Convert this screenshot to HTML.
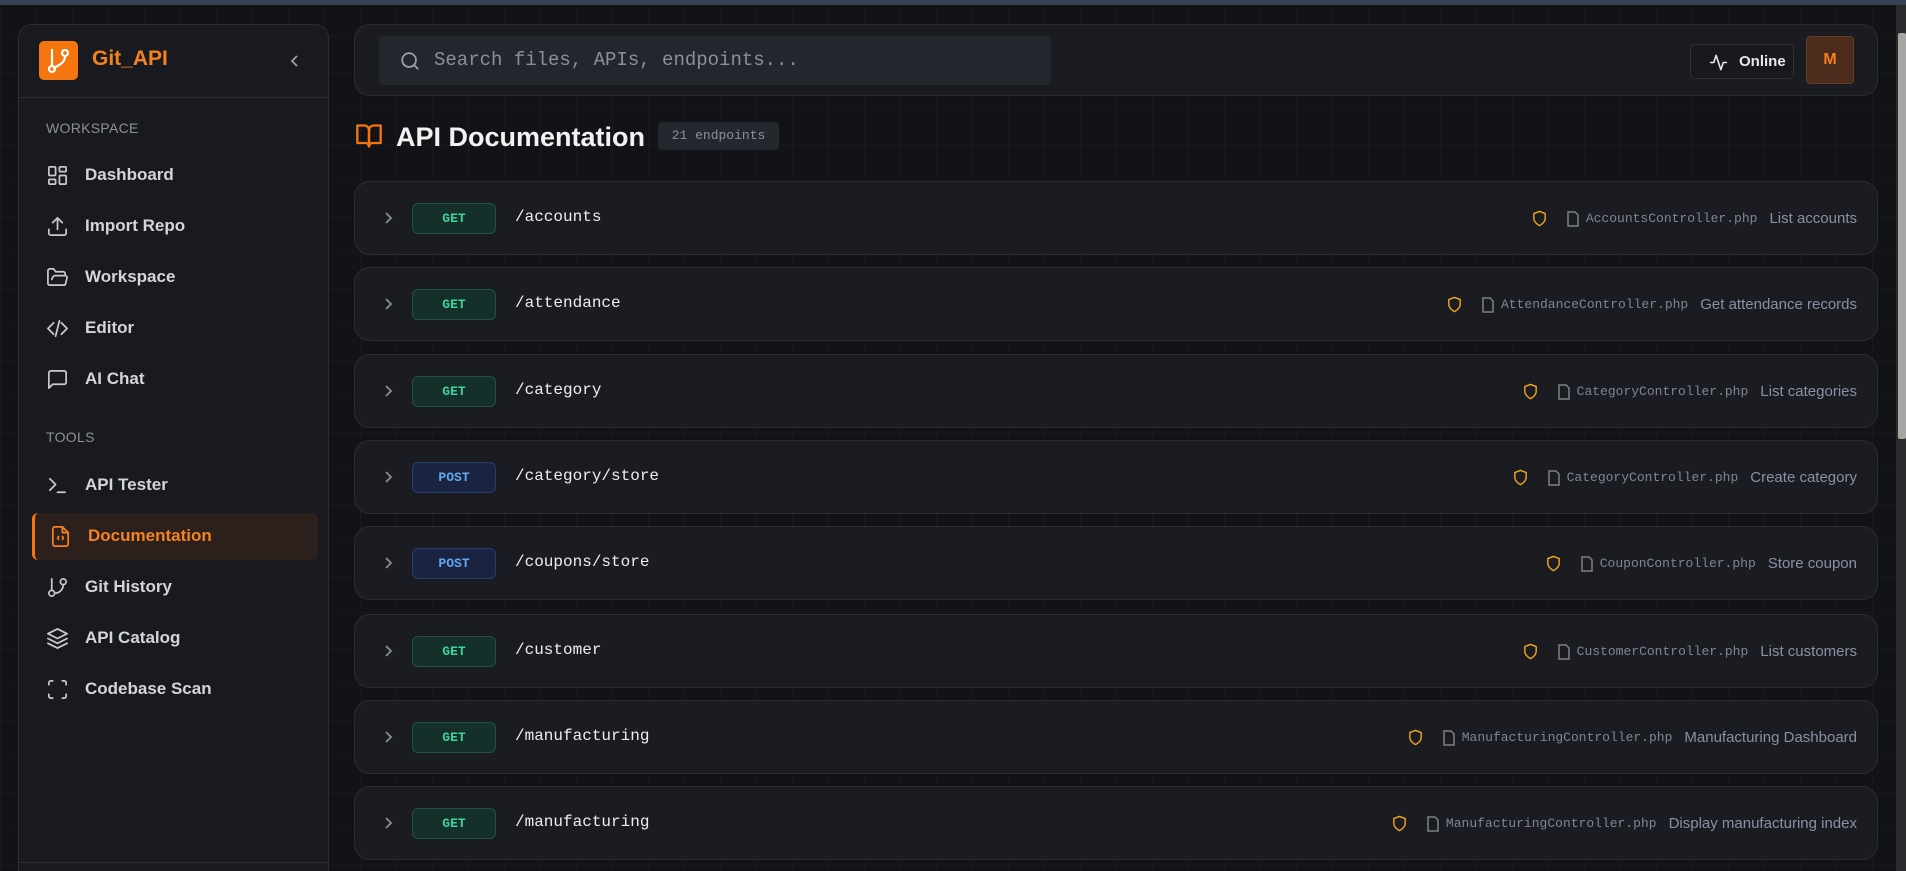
<!DOCTYPE html>
<html><head><meta charset="utf-8"><style>
*{box-sizing:border-box;margin:0;padding:0}
html,body{width:1906px;height:871px;overflow:hidden}
body{background:#111317;font-family:"Liberation Sans",sans-serif;position:relative;
background-image:linear-gradient(#17191d 1px,transparent 1px),linear-gradient(90deg,#17191d 1px,transparent 1px);background-size:36px 36px;}
#wrap{position:absolute;left:0;top:0;width:1906px;height:871px;overflow:hidden}
.topstrip{position:absolute;left:0;top:0;width:1906px;height:5px;background:#374256}
.sb{position:absolute;left:18px;top:24px;width:311px;height:880px;background:#181a1f;border:1px solid #2a2d33;border-radius:14px}
.logo{position:absolute;left:20px;top:16px;width:39px;height:39px;background:#f5760f;border-radius:5px}
.brand{position:absolute;left:73px;top:22px;color:#f5811f;font-size:21px;font-weight:bold}
.hdiv{position:absolute;left:0;right:0;top:72px;border-top:1px solid #2a2d33}
.lbl{position:absolute;left:27px;color:#8d9098;font-size:14px;letter-spacing:.3px}
.nav{position:absolute;left:27px;height:22px;display:flex;align-items:center;color:#d4d5d8;font-size:17px;font-weight:bold}
.nav svg{width:23px;height:23px;margin-right:16px;fill:none;stroke:#c8c9cc;stroke-width:1.8;stroke-linecap:round;stroke-linejoin:round}
.act{position:absolute;left:13px;top:488px;width:286px;height:47px;background:#2c201d;border-left:3px solid #f5760f;border-radius:6px}
.card{position:absolute;left:354px;width:1524px;background:#1a1c21;border:1px solid #2a2d33;border-radius:16px}
.search{position:absolute;left:24px;top:11px;width:672px;height:49px;background:#23262d;border-radius:4px;color:#8c8f96;font-family:"Liberation Mono",monospace;font-size:19px;line-height:49px;padding-left:55px}
.online{position:absolute;left:1335px;top:19px;width:104px;height:35px;border:1px solid #2e3137;border-radius:5px;background:#17191d;color:#e8e8ea;font-weight:bold;font-size:15px;line-height:33px;padding-left:48px}
.av{position:absolute;left:1451px;top:11px;width:48px;height:48px;background:#4a2b1c;border:1px solid #6b3a1e;border-radius:4px;color:#f5811f;font-weight:bold;font-size:16px;text-align:center;line-height:46px}
.title{position:absolute;left:396px;top:122px;color:#f2f2f3;font-size:27px;font-weight:bold}
.badge{position:absolute;left:658px;top:122px;width:121px;height:28px;background:#24272d;border-radius:4px;color:#8d9098;font-family:"Liberation Mono",monospace;font-size:13px;text-align:center;line-height:28px}
.row{height:74px}
.chev{position:absolute;left:26px;top:29px;width:14px;height:14px;fill:none;stroke:#8a8d94;stroke-width:1.8}
.m{position:absolute;left:57px;top:21px;width:84px;height:31px;border-radius:6px;font-family:"Liberation Mono",monospace;font-weight:bold;font-size:13px;text-align:center;line-height:29px}
.get{background:#15302a;border:1px solid #1f5443;color:#3fd39a}
.post{background:#1a2440;border:1px solid #223c74;color:#62a7ef}
.path{position:absolute;left:160px;top:26px;color:#eeeef0;font-family:"Liberation Mono",monospace;font-size:16px}
.rt{position:absolute;right:20px;top:27px;display:flex;align-items:center;white-space:nowrap}
.rt .sh{width:17px;height:19px;fill:none;stroke:#f0a61c;stroke-width:2;margin-right:18px}
.rt .fi{width:14px;height:16px;fill:none;stroke:#7d8087;stroke-width:1.5;margin-right:6px}
.fn{font-family:"Liberation Mono",monospace;font-size:13px;color:#7e8595;margin-right:12px}
.ds{font-size:15px;color:#8891a3}
.scroll{position:absolute;left:1896px;top:5px;width:10px;height:866px;background:#2b2b2d}
.thumb{position:absolute;left:1898px;top:33px;width:8px;height:406px;background:#a8a6a4;border-radius:2px}
</style></head><body><div id="wrap">
<div class="topstrip"></div>
<div class="sb">
 <div class="logo"><svg width="39" height="39" viewBox="0 0 39 39" fill="none" stroke="#fff" stroke-width="2.2" stroke-linecap="round"><line x1="13" y1="9" x2="13" y2="25"/><circle cx="13" cy="28" r="3"/><circle cx="26" cy="12" r="3"/><path d="M26 15c0 7-6 9-11 12"/></svg></div>
 <div class="brand">Git_API</div>
 <svg style="position:absolute;left:270px;top:29px" width="12" height="14" viewBox="0 0 12 14" fill="none" stroke="#9a9da3" stroke-width="1.8"><path d="M8 2L3 7l5 5"/></svg>
 <div class="hdiv"></div>
 <div class="lbl" style="top:95px">WORKSPACE</div>
 <div class="nav" style="top:139px"><svg viewBox="0 0 24 24"><rect x="3" y="3" width="7" height="9" rx="1"/><rect x="14" y="3" width="7" height="5" rx="1"/><rect x="14" y="12" width="7" height="9" rx="1"/><rect x="3" y="16" width="7" height="5" rx="1"/></svg>Dashboard</div>
 <div class="nav" style="top:190px"><svg viewBox="0 0 24 24"><path d="M21 15v4a2 2 0 0 1-2 2H5a2 2 0 0 1-2-2v-4"/><path d="M17 8l-5-5-5 5"/><path d="M12 3v12"/></svg>Import Repo</div>
 <div class="nav" style="top:241px"><svg viewBox="0 0 24 24"><path d="M6 14l1.5-3A2 2 0 0 1 9.2 10H20a2 2 0 0 1 1.9 2.5l-1.5 6A2 2 0 0 1 18.4 20H4a2 2 0 0 1-2-2V5a2 2 0 0 1 2-2h4l2 3h8a2 2 0 0 1 2 2v2"/></svg>Workspace</div>
 <div class="nav" style="top:292px"><svg viewBox="0 0 24 24"><path d="M16 18l6-6-6-6"/><path d="M8 6l-6 6 6 6"/><path d="M14 4l-4 16"/></svg>Editor</div>
 <div class="nav" style="top:343px"><svg viewBox="0 0 24 24"><path d="M21 15a2 2 0 0 1-2 2H7l-4 4V5a2 2 0 0 1 2-2h14a2 2 0 0 1 2 2z"/></svg>AI Chat</div>
 <div class="lbl" style="top:404px">TOOLS</div>
 <div class="nav" style="top:449px"><svg viewBox="0 0 24 24"><path d="M4 17l6-6-6-6"/><path d="M12 19h8"/></svg>API Tester</div>
 <div class="act"></div>
 <div class="nav" style="top:500px;left:30px;color:#f5811f"><svg viewBox="0 0 24 24" style="stroke:#f5811f"><path d="M14 2H6a2 2 0 0 0-2 2v16a2 2 0 0 0 2 2h12a2 2 0 0 0 2-2V8z"/><path d="M14 2v6h6"/><path d="M10 12l-1 1.5 1 1.5M14 12l1 1.5-1 1.5"/></svg>Documentation</div>
 <div class="nav" style="top:551px"><svg viewBox="0 0 24 24"><line x1="6" y1="3" x2="6" y2="15"/><circle cx="18" cy="6" r="3"/><circle cx="6" cy="18" r="3"/><path d="M18 9a9 9 0 0 1-9 9"/></svg>Git History</div>
 <div class="nav" style="top:602px"><svg viewBox="0 0 24 24"><path d="M12 2L2 7l10 5 10-5z"/><path d="M2 12l10 5 10-5"/><path d="M2 17l10 5 10-5"/></svg>API Catalog</div>
 <div class="nav" style="top:653px"><svg viewBox="0 0 24 24"><path d="M3 7V5a2 2 0 0 1 2-2h2M17 3h2a2 2 0 0 1 2 2v2M21 17v2a2 2 0 0 1-2 2h-2M7 21H5a2 2 0 0 1-2-2v-2"/></svg>Codebase Scan</div>
 <div class="hdiv" style="top:837px"></div>
</div>

<div class="card" style="top:24px;height:72px">
 <div class="search">Search files, APIs, endpoints...</div>
 <svg style="position:absolute;left:44px;top:25px" width="22" height="22" viewBox="0 0 24 24" fill="none" stroke="#9a9da3" stroke-width="2"><circle cx="11" cy="11" r="7.5"/><path d="M21 21l-4.5-4.5"/></svg>
 <div class="online">Online</div>
 <svg style="position:absolute;left:1354px;top:28px" width="19" height="19" viewBox="0 0 24 24" fill="none" stroke="#e8e8ea" stroke-width="2" stroke-linecap="round" stroke-linejoin="round"><path d="M22 12h-4l-3 9L9 3l-3 9H2"/></svg>
 <div class="av">M</div>
</div>

<svg style="position:absolute;left:354px;top:122px" width="30" height="28" viewBox="0 0 24 24" fill="none" stroke="#f5760f" stroke-width="2" stroke-linejoin="round"><path d="M2 3h6a4 4 0 0 1 4 4v14a3 3 0 0 0-3-3H2z"/><path d="M22 3h-6a4 4 0 0 0-4 4v14a3 3 0 0 1 3-3h7z"/></svg>
<div class="title">API Documentation</div>
<div class="badge">21 endpoints</div>

<div class="card row" style="top:181px"><svg class="chev" viewBox="0 0 14 14"><path d="M5 2l5 5-5 5"/></svg><div class="m get">GET</div><div class="path">/accounts</div><div class="rt"><svg class="sh" viewBox="0 0 24 24"><path d="M12 22s8-4 8-10V5l-8-3-8 3v7c0 6 8 10 8 10z"/></svg><svg class="fi" viewBox="0 0 14 16"><path d="M9 1H2v14h10V4z"/></svg><span class="fn">AccountsController.php</span><span class="ds">List accounts</span></div></div>
<div class="card row" style="top:267px"><svg class="chev" viewBox="0 0 14 14"><path d="M5 2l5 5-5 5"/></svg><div class="m get">GET</div><div class="path">/attendance</div><div class="rt"><svg class="sh" viewBox="0 0 24 24"><path d="M12 22s8-4 8-10V5l-8-3-8 3v7c0 6 8 10 8 10z"/></svg><svg class="fi" viewBox="0 0 14 16"><path d="M9 1H2v14h10V4z"/></svg><span class="fn">AttendanceController.php</span><span class="ds">Get attendance records</span></div></div>
<div class="card row" style="top:354px"><svg class="chev" viewBox="0 0 14 14"><path d="M5 2l5 5-5 5"/></svg><div class="m get">GET</div><div class="path">/category</div><div class="rt"><svg class="sh" viewBox="0 0 24 24"><path d="M12 22s8-4 8-10V5l-8-3-8 3v7c0 6 8 10 8 10z"/></svg><svg class="fi" viewBox="0 0 14 16"><path d="M9 1H2v14h10V4z"/></svg><span class="fn">CategoryController.php</span><span class="ds">List categories</span></div></div>
<div class="card row" style="top:440px"><svg class="chev" viewBox="0 0 14 14"><path d="M5 2l5 5-5 5"/></svg><div class="m post">POST</div><div class="path">/category/store</div><div class="rt"><svg class="sh" viewBox="0 0 24 24"><path d="M12 22s8-4 8-10V5l-8-3-8 3v7c0 6 8 10 8 10z"/></svg><svg class="fi" viewBox="0 0 14 16"><path d="M9 1H2v14h10V4z"/></svg><span class="fn">CategoryController.php</span><span class="ds">Create category</span></div></div>
<div class="card row" style="top:526px"><svg class="chev" viewBox="0 0 14 14"><path d="M5 2l5 5-5 5"/></svg><div class="m post">POST</div><div class="path">/coupons/store</div><div class="rt"><svg class="sh" viewBox="0 0 24 24"><path d="M12 22s8-4 8-10V5l-8-3-8 3v7c0 6 8 10 8 10z"/></svg><svg class="fi" viewBox="0 0 14 16"><path d="M9 1H2v14h10V4z"/></svg><span class="fn">CouponController.php</span><span class="ds">Store coupon</span></div></div>
<div class="card row" style="top:614px"><svg class="chev" viewBox="0 0 14 14"><path d="M5 2l5 5-5 5"/></svg><div class="m get">GET</div><div class="path">/customer</div><div class="rt"><svg class="sh" viewBox="0 0 24 24"><path d="M12 22s8-4 8-10V5l-8-3-8 3v7c0 6 8 10 8 10z"/></svg><svg class="fi" viewBox="0 0 14 16"><path d="M9 1H2v14h10V4z"/></svg><span class="fn">CustomerController.php</span><span class="ds">List customers</span></div></div>
<div class="card row" style="top:700px"><svg class="chev" viewBox="0 0 14 14"><path d="M5 2l5 5-5 5"/></svg><div class="m get">GET</div><div class="path">/manufacturing</div><div class="rt"><svg class="sh" viewBox="0 0 24 24"><path d="M12 22s8-4 8-10V5l-8-3-8 3v7c0 6 8 10 8 10z"/></svg><svg class="fi" viewBox="0 0 14 16"><path d="M9 1H2v14h10V4z"/></svg><span class="fn">ManufacturingController.php</span><span class="ds">Manufacturing Dashboard</span></div></div>
<div class="card row" style="top:786px"><svg class="chev" viewBox="0 0 14 14"><path d="M5 2l5 5-5 5"/></svg><div class="m get">GET</div><div class="path">/manufacturing</div><div class="rt"><svg class="sh" viewBox="0 0 24 24"><path d="M12 22s8-4 8-10V5l-8-3-8 3v7c0 6 8 10 8 10z"/></svg><svg class="fi" viewBox="0 0 14 16"><path d="M9 1H2v14h10V4z"/></svg><span class="fn">ManufacturingController.php</span><span class="ds">Display manufacturing index</span></div></div>

<div class="scroll"></div><div class="thumb"></div>
</div></body></html>
